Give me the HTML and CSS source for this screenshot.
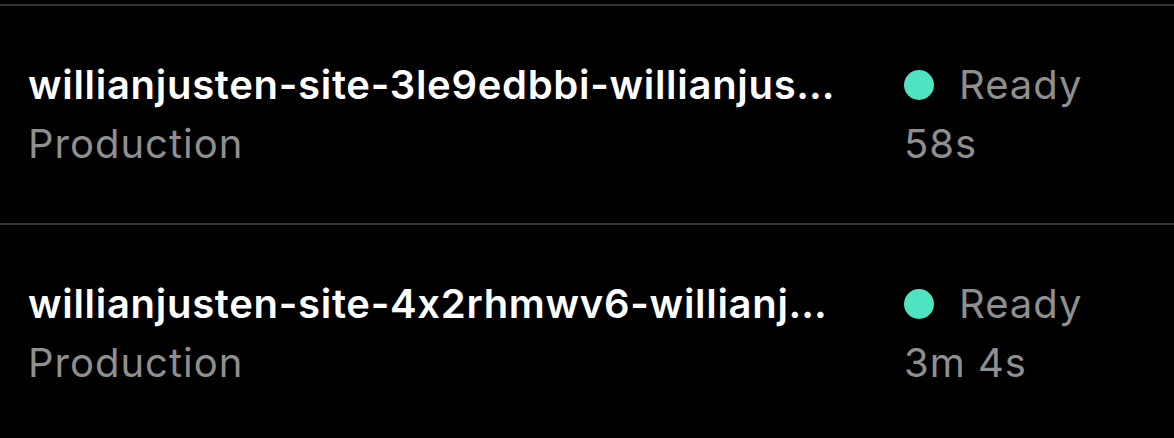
FILE: index.html
```html
<!DOCTYPE html>
<html>
<head>
<meta charset="utf-8">
<link rel="stylesheet" href="styles.css">
</head>
<body>
<div class="list">
  <div class="row">
    <div class="info">
      <div class="title">willianjusten-site-3le9edbbi-willianjusten.vercel.app</div>
      <div class="sub">Production</div>
    </div>
    <div class="status">
      <div class="state"><span class="dot"></span><span>Ready</span></div>
      <div class="sub">58s</div>
    </div>
  </div>
  <div class="row">
    <div class="info">
      <div class="title">willianjusten-site-4x2rhmwv6-willianjusten.vercel.app</div>
      <div class="sub">Production</div>
    </div>
    <div class="status">
      <div class="state"><span class="dot"></span><span>Ready</span></div>
      <div class="sub">3m 4s</div>
    </div>
  </div>
</div>
</body>
</html>
```
FILE: styles.css
```css
html, body {
  margin: 0;
  background: #000;
  font-family: Inter, "Noto Sans", sans-serif;
  font-feature-settings: "calt" 0;
}
.list {
  padding-top: 4px;
}
.row {
  border-top: 2px solid #333;
  padding: 56px 0 56px 28px;
  display: grid;
  grid-template-columns: 812px 1fr;
  column-gap: 64px;
}
.info {
  min-width: 0;
}
.title {
  color: #fff;
  font-weight: 600;
  font-size: 40px;
  letter-spacing: 0.7px;
  line-height: 46px;
  white-space: nowrap;
  overflow: hidden;
  text-overflow: ellipsis;
}
.sub {
  color: #8f8f8f;
  font-size: 40px;
  letter-spacing: 1px;
  line-height: 46px;
  margin-top: 13px;
}
.state {
  display: flex;
  align-items: center;
  gap: 25px;
  color: #8f8f8f;
  font-size: 40px;
  letter-spacing: 1px;
  line-height: 46px;
}
.dot {
  width: 30px;
  height: 30px;
  border-radius: 50%;
  background: #50e3c2;
  flex: none;
}
```
